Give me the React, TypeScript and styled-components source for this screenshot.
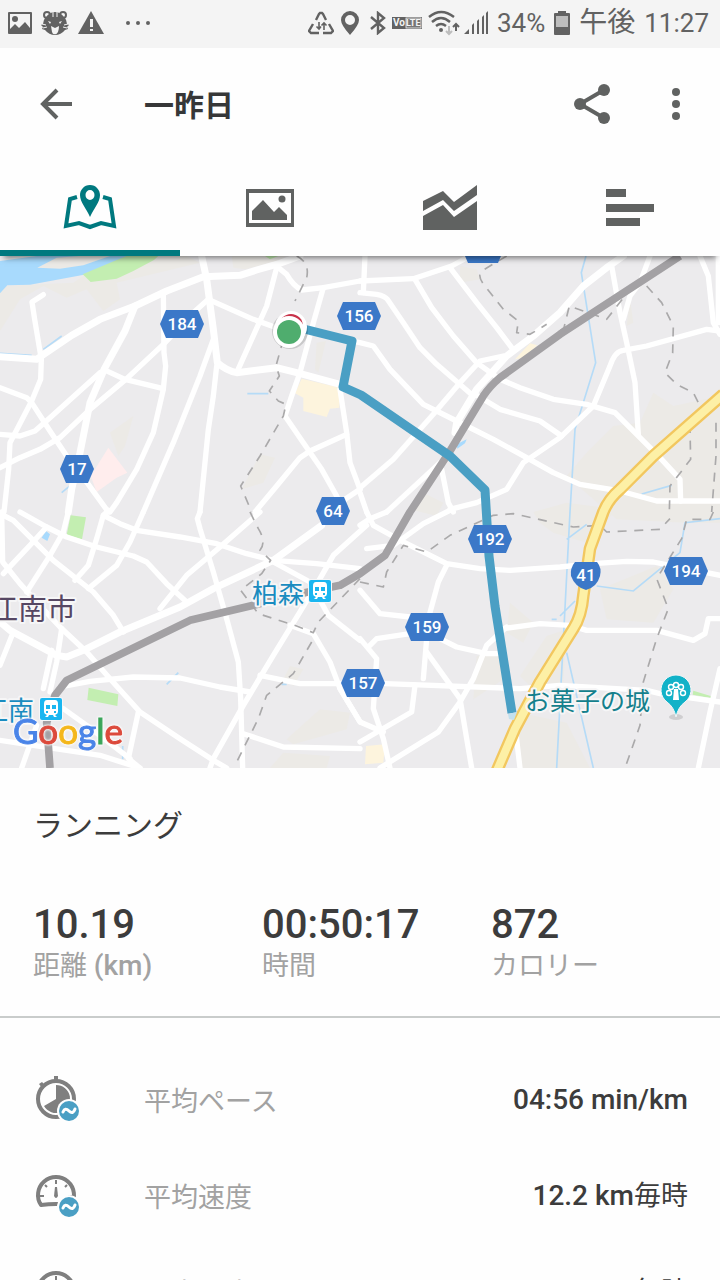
import React from 'react';
import styled, { createGlobalStyle } from 'styled-components';

const GlobalStyle = createGlobalStyle`
  * { box-sizing: border-box; }
  body {
    margin: 0;
    background: #fefefe;
    color: #3c3c3c;
    font-family: Roboto, "Noto Sans CJK JP", sans-serif;
    overflow-x: hidden;
  }
`;

const Page = styled.div`
  display: flex;
  flex-direction: column;
  width: 100%;
`;

const StatusBar = styled.div`
  display: flex;
  align-items: center;
  justify-content: space-between;
  height: 48px;
  padding: 0 11px 2px 8px;
  background: #f4f4f4;
  color: #626262;
`;

const StatusGroup = styled.div<{ $gap: number }>`
  display: flex;
  align-items: center;
  gap: ${(p) => p.$gap}px;
`;

const StatusText = styled.span<{ $large?: boolean }>`
  font-size: ${(p) => (p.$large ? 28 : 26)}px;
  line-height: 46px;
  white-space: nowrap;
`;

const AppBar = styled.header`
  display: flex;
  align-items: center;
  height: 112px;
  padding: 0 20px 0 32px;
  color: #606261;
`;

const Title = styled.h1`
  flex: 1;
  margin: 0 0 0 64px;
  padding-top: 4px;
  font-size: 30px;
  line-height: 40px;
  font-weight: 700;
  color: #363738;
`;

const IconButton = styled.button`
  display: flex;
  align-items: center;
  justify-content: center;
  width: 48px;
  height: 48px;
  padding: 0;
  border: 0;
  background: none;
  color: inherit;
`;

const Actions = styled.div`
  display: flex;
  gap: 36px;
`;

const Tabs = styled.nav`
  position: relative;
  z-index: 1;
  display: grid;
  grid-template-columns: repeat(4, 1fr);
  height: 96px;
  background: #fefefe;
  box-shadow: 0 6px 6px -4px rgba(0, 0, 0, 0.5);
`;

const Tab = styled.button<{ $active?: boolean }>`
  display: flex;
  align-items: center;
  justify-content: center;
  padding: 6px 0 0;
  border: 0;
  border-bottom: 6px solid ${(p) => (p.$active ? '#00797f' : 'transparent')};
  background: none;
  color: ${(p) => (p.$active ? '#00797f' : '#606261')};
`;

const MapArea = styled.div`
  display: grid;
  overflow: hidden;
  background: #ecebed;
  & > * {
    grid-area: 1 / 1;
  }
`;

const MapLayer = styled.svg`
  display: block;
  width: 100%;
  height: 512px;
`;

const Halo = styled.text<{ $color: string; $size: number }>`
  font-family: Roboto, "Noto Sans CJK JP", sans-serif;
  font-size: ${(p) => p.$size}px;
  fill: ${(p) => p.$color};
  stroke: #f6f6f7;
  stroke-width: 4px;
  stroke-linejoin: round;
  paint-order: stroke;
`;

const Logo = styled.text`
  font-family: Lato, sans-serif;
  font-size: 35px;
  stroke-width: 1px;
  filter: drop-shadow(0 0 1px #fff) drop-shadow(0 0 1px #fff);
`;

const LogoLetter = styled.tspan<{ $color: string }>`
  fill: ${(p) => p.$color};
  stroke: ${(p) => p.$color};
`;

const ShieldText = styled.text`
  font-family: Roboto, sans-serif;
  font-size: 17px;
  font-weight: 500;
  fill: #fff;
  text-anchor: middle;
`;

const Summary = styled.section`
  display: flex;
  flex-direction: column;
  gap: 54px;
  padding: 38px 0 34px 33px;
  border-bottom: 2px solid #c9cccb;
`;

const Activity = styled.h2`
  margin: 0;
  font-size: 30px;
  line-height: 40px;
  font-weight: 400;
`;

const Stats = styled.dl`
  display: grid;
  grid-template-columns: repeat(3, 1fr);
  margin: 0;
`;

const Stat = styled.div`
  display: flex;
  flex-direction: column-reverse;
`;

const StatLabel = styled.dt`
  font-size: 27px;
  line-height: 32px;
  color: #a2a2a2;
  white-space: nowrap;
`;

const StatValue = styled.dd`
  margin: 0;
  font-size: 40px;
  line-height: 50px;
  font-weight: 500;
`;

const Unit = styled.span`
  font-size: 28px;
  font-weight: 500;
`;

const Kanji = styled.span`
  font-size: 27px;
  font-weight: 400;
`;

const Details = styled.dl`
  margin: 0;
  padding-top: 34px;
`;

const DetailRow = styled.div`
  display: flex;
  align-items: center;
  height: 96px;
  padding: 0 32px;
`;

const DetailIcon = styled.svg`
  flex: none;
  width: 48px;
  height: 48px;
  margin-right: 64px;
`;

const DetailLabel = styled.dt`
  flex: 1;
  padding-top: 3px;
  font-size: 27px;
  line-height: 40px;
  color: #a2a2a2;
`;

const DetailValue = styled.dd`
  margin: 0;
  font-size: 28px;
  line-height: 40px;
  font-weight: 500;
`;

/* ---- map data: each quadrant of the map carries its own origin ---- */

type Quad = 'nw' | 'ne' | 'sw' | 'se';
const origin: Record<Quad, string> = {
  nw: 'translate(0 0)',
  ne: 'translate(1080 0)',
  sw: 'translate(0 768)',
  se: 'translate(1080 768)',
};

const roads: Record<Quad, string[]> = {
  nw: [
    'M130 116L96 138L104 190L124 310L122 370L95 435L30 560L26 640L12 768',
    'M0 395L80 425L95 440L150 525L200 600L265 685L325 768',
    'M0 535L60 540L105 525L150 485L300 350',
    'M0 635L60 605L120 580L180 545L270 460L380 368L490 265L580 170L625 130',
    'M310 340L375 370L490 398',
    'M490 110L492 290L497 330L490 400L460 530L410 640L350 740L330 768',
    'M625 130L760 190L830 215',
    'M640 250L600 360L520 560L430 768',
    'M650 330L640 420L625 520L600 768',
    'M830 35L800 150L710 350',
    'M835 35L860 55Q880 90 905 102L970 95L1080 75',
    'M970 95L940 200L900 350L875 420L855 480L910 560L965 640L1010 720L1030 768',
    'M1020 400L1040 530L1050 620L1080 700',
    'M1040 535L930 585L900 605L830 690L765 768',
    'M1000 768L1035 730L1080 700',
  ],
  ne: [
    'M0 75L160 68L275 30L330 0',
    'M15 0L10 110',
    'M0 110L50 115Q75 120 82 130L130 200L180 275L230 325L340 420',
    'M165 70L215 155L280 240L350 320L420 370L480 395L580 430L680 445L765 470L840 545L900 605L960 670L962 735',
    'M270 35L350 140L410 215L455 275',
    'M430 300L360 315L300 380L220 475L100 610L0 695',
    'M-25 255L0 260L40 270L90 340L190 445L290 495L400 550L500 605L580 650L660 685L780 705L890 735L1080 735',
    'M345 415L420 460L540 495L605 540',
    'M270 760L350 740L440 700L490 620L600 545L700 450L750 330Q765 285 790 283L860 270L1040 220L1080 225',
    'M755 30L780 170L800 260L825 380L835 535',
    'M870 0L840 80L810 120L790 190',
    'M1020 0L1045 60L1060 200L1080 235',
    'M1075 0V200',
    'M240 620L80 768',
    'M0 710L20 768',
    'M245 640L265 740L280 768',
  ],
  sw: [
    'M0 5L40 25L160 145L280 240L340 310L370 360',
    'M60 0L140 45L200 75L290 105L400 132L440 150L500 215L560 270',
    'M205 0L190 60L150 130L80 240',
    'M140 45L90 100L10 185',
    'M5 0L8 150L60 215L110 270L180 345L260 420L330 500L420 600L540 680L640 745L680 768',
    'M325 -5L310 10L290 80L265 160L225 205',
    'M310 10L360 35L410 55L540 75L650 95L740 125L820 145L950 155L1080 170',
    'M430 0L390 90L350 160L265 230',
    'M780 0L660 105L560 190L480 290',
    'M600 0L592 20L600 50L640 180L680 320L715 450L722 560L728 768',
    'M820 150L930 210L985 310L1080 385',
    'M1100 40L1000 130L960 200L900 300L820 430L730 580L640 740L630 768',
    'M40 360L0 460',
    'M155 415L130 530',
    'M185 350L170 450L150 540',
    'M180 525L270 508L400 495L540 498L660 525L750 540',
    'M780 490L900 515L1020 515',
    'M870 340L940 365L990 450L1020 530L1080 630',
    'M730 665L850 705L1080 710',
    'M0 685L100 700L300 730L420 768',
    'M110 640L65 768',
    'M415 600L385 740L420 768',
    'M190 590L260 640L390 740',
  ],
  se: [
    'M20 0L40 40L130 90L260 155L360 170L450 175L600 165L700 155L800 148L880 150L1080 190',
    'M0 40L30 20L80 0',
    'M20 110L100 100L190 35L270 -5',
    'M0 235L60 305L150 315',
    'M260 160L235 210L205 320L190 500',
    'M0 380L50 440L40 590L70 680L90 768',
    'M30 400L50 380L150 365L240 380L290 405L380 425L430 425',
    'M430 350L540 335L630 340L680 355L890 355L1000 385L1035 365L1045 320L1080 320',
    'M440 345L380 400L340 500L300 570L235 660L60 768',
    'M0 690L155 600L165 520',
    'M200 420L300 560L320 680L335 768',
    'M-20 515L75 515L480 530L600 520L860 535L900 545L1080 570',
    'M465 640L480 768',
    'M1080 470L1050 600L1015 768',
    'M-60 530L0 630L70 660',
  ],
};

const mainRoads: Record<Quad, string[]> = {
  nw: [
    'M0 302L110 310L130 296L215 238L300 190L405 150L500 105L610 62L720 58L770 42L840 22L900 0',
    'M405 150L375 225L315 335L270 440L240 590L215 700L205 768',
    'M605 0L620 70L640 220L652 320Q680 345 710 350L830 335L890 350L1020 385',
  ],
  ne: ['M790 0L740 35L670 90L600 170L520 240L440 300L350 400L290 500L285 530'],
  sw: ['M965 40L820 145L640 230L540 285L360 360L250 415L200 435L170 430L30 355L0 330'],
  se: [],
};

const borders: Record<Quad, string[]> = {
  nw: [
    'M890 0Q930 20 920 65L885 135',
    'M850 250L828 330L838 360L808 405L835 435L858 445L850 480L780 600L722 690L755 768',
  ],
  ne: [
    'M440 0L365 45Q350 60 375 90L430 160L475 195L470 230L510 235L560 205',
    'M600 225L612 215L628 150L740 190L810 100',
    'M860 90L905 140L940 210L938 290L915 350L950 385L1000 410L1020 450L990 520L992 610L930 690L928 768',
    'M1068 500V600L1055 768',
  ],
  sw: [
    'M750 0L775 50Q800 90 780 115L812 145L785 185L722 235L775 305L890 342L940 362L955 330L1080 200',
    'M935 390L880 485L800 550L775 620L710 750',
  ],
  se: [
    'M0 210L70 225L80 180L130 100L200 120L270 70L400 10L460 5L640 45L720 40L740 60L900 52L930 20',
    'M1060 0L1050 22L980 22L965 80L890 200L925 290L890 380L850 510L840 640L795 768',
  ],
};

const Strokes = ({ data, ...rest }: { data: Record<Quad, string[]> } & React.SVGProps<SVGGElement>) => (
  <g fill="none" strokeLinejoin="round" {...rest}>
    {(Object.keys(data) as Quad[]).map((q) => (
      <g key={q} transform={origin[q]}>
        {data[q].map((d) => (
          <path key={d} d={d} />
        ))}
      </g>
    ))}
  </g>
);

const Shield = ({ x, y, label }: { x: number; y: number; label: string }) => {
  const w = label.length > 2 ? 22 : 17;
  return (
    <g transform={`translate(${x} ${y})`}>
      <path d={`M${-w} 0L${6 - w} -14H${w - 6}L${w} 0L${w - 6} 14H${6 - w}Z`} fill="#3b78c8" />
      <ShieldText y="6">{label}</ShieldText>
    </g>
  );
};

const Station = ({ x, y }: { x: number; y: number }) => (
  <g transform={`translate(${x} ${y})`}>
    <rect x="-12" y="-12" width="24" height="24" rx="3" fill="#f6f6f7" />
    <rect x="-11" y="-11" width="22" height="22" rx="2" fill="#1ab6f0" />
    <path
      fillRule="evenodd"
      fill="#fff"
      d="M-4 -9H4Q7 -9 7 -5V3Q7 5 4 6L6 8H3L2 6H-2L-3 8H-6L-4 6Q-7 5 -7 3V-5Q-7 -9 -4 -9ZM-5 -4V0H-1V-4ZM1 -4V0H5V-4ZM-5 2V4H-3V2ZM3 2V4H5V2Z"
    />
  </g>
);

const nationalRoad = 'M2170 415L1960 600L1860 700Q1825 730 1810 768L1770 878L1750 1018Q1745 1080 1720 1118L1620 1278L1545 1418L1490 1546';

const RouteMap = () => (
  <MapLayer viewBox="0 0 720 512" preserveAspectRatio="xMidYMid slice" role="img" aria-label="ランニングのルート">
    <g transform="scale(0.33333)">
      {/* land cover */}
      <g fill="#eceae6">
        <path d="M0 90L220 80L340 0H560L600 20L350 80L360 130L310 165L260 100L200 125L130 90L60 130L0 225Z" />
        <path d="M695 0H860L830 15L735 40L700 35Z" />
        <path d="M400 480L330 530L355 600L375 570Z" />
        <path d="M780 595L825 605L790 680L725 700Z" />
        <path d="M950 260L978 255L955 350L945 340Z" />
        <path d="M1380 30L1430 40L1440 70L1380 80Z" />
        <path d="M1890 130L1900 200L1880 210Z" />
        <path d="M1960 410L2020 450L2160 420V800H2060L1850 790L1700 660L1760 590L1840 510L1920 500Z" />
        <path d="M1270 710L1330 740L1310 780L1230 760Z" />
        <path d="M1600 768L1700 740L1850 760L1760 860L1660 830L1620 800Z" />
        <path d="M1800 1000L1970 930L2020 1000L1960 1100L1820 1090Z" />
        <path d="M1530 1040L1600 1100L1570 1160L1520 1130Z" />
        <path d="M1640 1140L1700 1120L1690 1280L1600 1300L1560 1260Z" />
        <path d="M1430 1200L1500 1190L1510 1270L1420 1330Z" />
        <path d="M1560 1370L1700 1400L1770 1536H1560Z" />
        <path d="M960 1360L1050 1370L1040 1420L880 1465L860 1450Z" />
        <path d="M850 1490L990 1500L980 1536H810Z" />
        <path d="M870 1230L910 1240L880 1290L850 1270Z" />
      </g>
      <path fill="#a8dafd" d="M0 15L110 0H400L350 30L260 55L90 86L22 88L0 112Z" />
      <path fill="#eceae6" d="M112 35L170 5L240 0H330L250 28L180 38Z" />
      <path fill="#c3eeb1" d="M248 55L350 12L380 0H475L462 12L400 45L350 68L272 78ZM795 0H835L810 10ZM212 778L258 784L246 850L200 836ZM266 1295L355 1315L352 1350L262 1332ZM2080 1304L2132 1320V1326L2078 1316Z" />
      <path fill="#ffeded" d="M325 575L382 650L350 665L290 708L272 660Z" />
      <path fill="#fdf4dd" d="M905 368L1020 395L1018 455L990 458L980 483L910 465V425L885 412ZM1590 262L1612 268L1570 305L1545 310ZM1098 1470L1155 1465L1150 1520L1095 1525Z" />
      <path
        fill="none"
        stroke="#b5dbf7"
        strokeWidth="5"
        d="M0 292L95 298M130 280L185 240M742 413H805M185 710L215 685M1758 0L1744 50L1787 320L1725 520L1710 768L1670 1536M1700 850L1760 805M1680 1080L1725 1035M1670 1090H1655M1700 1190L1780 1536M1790 990L1900 1005L2040 890L2055 800L2160 788M1925 714L2015 688M500 1285L535 1250M368 1470V1510M845 1285H860"
      />
      <path fill="#a8dafd" d="M1370 565L1400 550L1395 562L1372 578ZM138 825L150 835L142 855L125 845Z" />

      <Strokes data={roads} stroke="#fff" strokeWidth="16" strokeLinecap="round" />
      <Strokes data={mainRoads} stroke="#fff" strokeWidth="21" strokeLinecap="round" />
      <Strokes data={borders} stroke="#aaa9aa" strokeWidth="5" strokeDasharray="27 23" />

      {/* railway */}
      <path
        fill="none"
        stroke="#a3a1a4"
        strokeWidth="23"
        strokeLinejoin="round"
        d="M2040 0L1940 65L1680 235L1500 365Q1470 390 1450 420L1350 585L1230 768L1155 898L1080 953L1020 988L900 1013L760 1048L570 1093L200 1273L165 1318L140 1400L150 1536"
      />

      {/* national road */}
      <g fill="none" strokeLinejoin="round">
        <path stroke="#f2c75f" strokeWidth="38" d={nationalRoad} />
        <path stroke="#fdf0a6" strokeWidth="24" d={nationalRoad} />
      </g>
    </g>

    {/* recorded track */}
    <path
      d="M300 72L352 85L343 131L361 139L450 200L485 234L489 300L495 350L512 457"
      fill="none"
      stroke="#4a9fc4"
      strokeWidth="9"
      strokeLinejoin="round"
    />
    <path d="M508 458L517 456L514 464L509 463Z" fill="#c3e0ee" />
  </MapLayer>
);

const MapLabels = () => (
  <MapLayer viewBox="0 0 720 512" preserveAspectRatio="xMidYMid slice">
    <Shield x={182} y={68} label="184" />
    <Shield x={359} y={60} label="156" />
    <Shield x={77} y={213} label="17" />
    <Shield x={333} y={255} label="64" />
    <Shield x={490} y={283} label="192" />
    <Shield x={427} y={371} label="159" />
    <Shield x={363} y={427} label="157" />
    <Shield x={686} y={315} label="194" />
    <path d="M462 -7H504L498 7H468Z" fill="#3b78c8" />
    <path d="M575 306H597Q602 312 600 320Q597 331 586 334Q575 331 571 320Q570 312 575 306Z" fill="#3b78c8" />
    <ShieldText x="586" y="325">41</ShieldText>

    <Halo x="-11" y="364" $size={29} $color="#564763">江南市</Halo>
    <Halo x="252" y="347" $size={26} $color="#1a8cc0">柏森</Halo>
    <Station x={320} y={335} />
    <Halo x="-18" y="464" $size={26} $color="#1a8cc0">江南</Halo>
    <Station x={51} y={453} />
    <Halo x="525" y="454" $size={25} $color="#14808c">お菓子の城</Halo>

    <ellipse cx="676" cy="461" rx="7" ry="3" fill="#000" opacity="0.12" />
    <path d="M676 461Q674 451 667 446A15 15 0 1 1 685 446Q678 451 676 461Z" fill="#12b2c8" stroke="#f6f6f7" />
    <g fill="none" stroke="#fff" strokeWidth="1.4">
      <circle cx="676" cy="429" r="2.500" />
      <circle cx="671" cy="431" r="2.500" />
      <circle cx="681" cy="431" r="2.500" />
      <circle cx="669" cy="437" r="2.500" />
      <circle cx="683" cy="437" r="2.500" />
    </g>
    <path d="M674 433H678L679 444H673Z" fill="#fff" />

    <circle cx="290" cy="75" r="18" fill="#000" opacity="0.15" />
    <circle cx="291" cy="71" r="16" fill="#fff" />
    <circle cx="291" cy="70" r="12" fill="#c8324a" />
    <circle cx="289" cy="76" r="16" fill="#fff" />
    <circle cx="289" cy="76" r="12" fill="#4fad6e" />

    <Logo x="13" y="488">
      <LogoLetter $color="#4a84e8">G</LogoLetter>
      <LogoLetter $color="#dc4a3c">o</LogoLetter>
      <LogoLetter $color="#f4b71c">o</LogoLetter>
      <LogoLetter $color="#4a84e8">g</LogoLetter>
      <LogoLetter $color="#3ba55a">l</LogoLetter>
      <LogoLetter $color="#dc4a3c">e</LogoLetter>
    </Logo>
  </MapLayer>
);

/* ---- icons ---- */

const StatusIcons = {
  picture: (
    <svg width="24" height="24" viewBox="0 0 24 24" fill="currentColor">
      <path fillRule="evenodd" d="M1 1H23Q24 1 24 2V22Q24 23 23 23H1Q0 23 0 22V2Q0 1 1 1ZM2 3V18L7 13L11 17L17 11L22 17V3Z" />
      <circle cx="7" cy="8" r="3" />
    </svg>
  ),
  tiger: (
    <svg width="28" height="26" viewBox="0 0 28 26">
      <g fill="#f4f4f4" stroke="currentColor" strokeWidth="2">
        <circle cx="6" cy="5" r="3" />
        <circle cx="22" cy="5" r="3" />
      </g>
      <path fill="currentColor" d="M14 2Q19 2 23 7Q26 10 26 14L28 15L26 17L27 19L24 20Q20 25 14 25Q8 25 4 20L1 19L2 17L0 15L2 14Q2 10 5 7Q9 2 14 2Z" />
      <path fill="none" stroke="#f4f4f4" d="M12 2V7M16 2V7M1 14L5 15M2 18L6 17M27 14L23 15M26 18L22 17" />
      <path fill="#f4f4f4" d="M7 11L10 12L9 14ZM21 11L18 12L19 14ZM10 16L14 18L18 16Q18 19 17 22Q15 25 14 24Q12 25 11 22Z" />
    </svg>
  ),
  warning: (
    <svg width="26" height="24" viewBox="0 0 26 24">
      <path fill="currentColor" d="M13 0L26 23H0Z" />
      <path fill="#f4f4f4" d="M12 8H15V16H12ZM12 18H15V20H12Z" />
    </svg>
  ),
  dots: (
    <svg width="28" height="24" viewBox="0 0 28 24" fill="currentColor">
      <circle cx="6" cy="12" r="2" />
      <circle cx="16" cy="12" r="2" />
      <circle cx="26" cy="12" r="2" />
    </svg>
  ),
  recycle: (
    <svg width="26" height="24" viewBox="0 0 26 24" fill="none" stroke="currentColor" strokeWidth="2.4">
      <path d="M8 9L11 3L12 2H14L15 3L18 9M21 13L25 20L23 22H15M11 22H3L1 20L5 13" />
      <path strokeWidth="1.6" d="M11 11V18M8.500 15.500L11 18L13 15.500M16 19V12M13.500 14.500L16 12L18.500 14.500" />
    </svg>
  ),
  pin: (
    <svg width="20" height="24" viewBox="0 0 20 24" fill="currentColor">
      <path fillRule="evenodd" d="M10 0A9 9 0 0 1 19 9Q19 14 10 24Q1 14 1 9A9 9 0 0 1 10 0ZM10 4A5 5 0 1 0 10 14A5 5 0 1 0 10 4Z" />
    </svg>
  ),
  bluetooth: (
    <svg width="20" height="24" viewBox="0 0 20 24" fill="none" stroke="currentColor" strokeWidth="2.4">
      <path d="M5 6L18 17L12 22V2L18 7L5 18" />
    </svg>
  ),
  volte: (
    <svg width="30" height="24" viewBox="0 0 30 24">
      <rect x="0" y="6" width="30" height="12" fill="currentColor" />
      <rect x="14" y="7" width="15" height="10" fill="#777" stroke="#f4f4f4" strokeWidth="0.8" />
      <text x="1" y="15" fill="#f4f4f4" fontSize="10" fontWeight="700" fontFamily="Roboto, sans-serif">Vo</text>
      <text x="14" y="15" fill="#f4f4f4" fontSize="9" fontWeight="700" fontFamily="Roboto, sans-serif">LTE</text>
    </svg>
  ),
  wifi: (
    <svg width="30" height="24" viewBox="0 0 30 24" overflow="visible" fill="none" stroke="currentColor" strokeWidth="2.4">
      <path d="M1 6Q13 -4 26 6M4 11Q13 3 22 11M8 15Q13 11 18 15" />
      <circle cx="13" cy="19" r="2" fill="currentColor" stroke="none" />
      <path stroke="#bdbdbd" strokeWidth="2" d="M21 15V23M18 20L21 23L24 20" />
      <path strokeWidth="2" d="M28 20V13M25 16L28 13L31 16" />
    </svg>
  ),
  signal: (
    <svg width="24" height="24" viewBox="0 0 24 24" fill="currentColor">
      <path d="M0 23L5 18V23ZM8 14L10 12V23H8ZM13 10L15 8V23H13ZM18 6L20 4V23H18ZM22 2L24 0V23H22Z" />
    </svg>
  ),
  battery: (
    <svg width="16" height="24" viewBox="0 0 16 24">
      <path fill="currentColor" d="M4 0H12V2H15Q16 2 16 3V23Q16 24 15 24H1Q0 24 0 23V3Q0 2 1 2H4Z" />
      <path fill="#bdbdbd" d="M2 5H14V16H2Z" />
    </svg>
  ),
};

const AverageBadge = () => (
  <>
    <circle cx="37" cy="35" r="12" fill="#fefefe" />
    <circle cx="37" cy="35" r="10" fill="#4a9fc4" />
    <path d="M31 36Q33 31 37 35T43 33" fill="none" stroke="#fff" strokeWidth="3" strokeLinecap="round" />
  </>
);

const PaceIcon = () => (
  <DetailIcon viewBox="0 0 48 48" aria-hidden="true">
    <circle cx="24" cy="23" r="18" fill="none" stroke="#7f7f7f" strokeWidth="4" />
    <path d="M22 0H26V4H22ZM7 8L10 6L13 9L10 12Z" fill="#7f7f7f" />
    <path d="M24 9A14 14 0 1 1 12 30L24 23Z" fill="#7f7f7f" />
    <AverageBadge />
  </DetailIcon>
);

const SpeedIcon = ({ average }: { average?: boolean }) => (
  <DetailIcon viewBox="0 0 48 48" aria-hidden="true">
    <path d="M9 33A18 18 0 1 1 39 33Q24 31 9 33Z" fill="none" stroke="#7f7f7f" strokeWidth="4" strokeLinejoin="round" />
    <path d="M24 8V12M8 24H12M36 24H40M13 13L15 15M35 13L33 15" stroke="#7f7f7f" strokeWidth="2" />
    <path d="M23 15H25L26 24Q24 28 22 24Z" fill="#7f7f7f" />
    {average && <AverageBadge />}
  </DetailIcon>
);

export default function App() {
  return (
    <Page>
      <GlobalStyle />
      <StatusBar>
        <StatusGroup $gap={18}>
          <StatusGroup $gap={9}>
            {StatusIcons.picture}
            {StatusIcons.tiger}
            {StatusIcons.warning}
          </StatusGroup>
          {StatusIcons.dots}
        </StatusGroup>
        <StatusGroup $gap={9}>
          <StatusGroup $gap={6}>
            {StatusIcons.recycle}
            {StatusIcons.pin}
            {StatusIcons.bluetooth}
            {StatusIcons.volte}
            {StatusIcons.wifi}
            {StatusIcons.signal}
          </StatusGroup>
          <StatusText>34%</StatusText>
          {StatusIcons.battery}
          <StatusText $large>午後</StatusText>
          <StatusText>11:27</StatusText>
        </StatusGroup>
      </StatusBar>

      <AppBar>
        <IconButton aria-label="戻る">
          <svg width="32" height="32" viewBox="0 0 32 32" fill="none" stroke="currentColor" strokeWidth="4">
            <path d="M32 16H3M17 2L3 16L17 30" />
          </svg>
        </IconButton>
        <Title>一昨日</Title>
        <Actions>
          <IconButton aria-label="共有">
            <svg width="36" height="40" viewBox="0 0 36 40" fill="currentColor">
              <path d="M30 6L6 20L30 34" fill="none" stroke="currentColor" strokeWidth="4" />
              <circle cx="30" cy="6" r="6" />
              <circle cx="6" cy="20" r="6" />
              <circle cx="30" cy="34" r="6" />
            </svg>
          </IconButton>
          <IconButton aria-label="メニュー">
            <svg width="8" height="32" viewBox="0 0 8 32" fill="currentColor">
              <circle cx="4" cy="4" r="4" />
              <circle cx="4" cy="16" r="4" />
              <circle cx="4" cy="28" r="4" />
            </svg>
          </IconButton>
        </Actions>
      </AppBar>

      <Tabs>
        <Tab $active aria-label="マップ">
          <svg width="56" height="48" viewBox="0 0 56 48" fill="currentColor">
            <path d="M15 13L8 15L4 42L17 39L28 43L39 39L52 42L48 15L41 13" fill="none" stroke="currentColor" strokeWidth="4" />
            <path fillRule="evenodd" d="M28 1C34 1 38 6 38 11C38 18 32 24 28 33C24 24 18 18 18 11C18 6 22 1 28 1ZM28 6A4.500 5 0 1 0 28 16A4.500 5 0 1 0 28 6Z" />
          </svg>
        </Tab>
        <Tab aria-label="写真">
          <svg width="48" height="48" viewBox="0 0 48 48" fill="currentColor">
            <path fillRule="evenodd" d="M0 5H48V43H0ZM3 9V39H45V9Z" />
            <path d="M6 36V27L17 16L28 28L33 23L41 31V36Z" />
            <circle cx="36" cy="15" r="3.500" />
          </svg>
        </Tab>
        <Tab aria-label="グラフ">
          <svg width="54" height="48" viewBox="0 0 54 48" fill="currentColor">
            <path d="M0 17L20 7L31 18L54 1V11L31 27L20 16L0 27ZM0 32L20 21L31 33L54 17V46H0Z" />
          </svg>
        </Tab>
        <Tab aria-label="ラップ">
          <svg width="48" height="48" viewBox="0 0 48 48" fill="currentColor">
            <path d="M0 5H20V13H0ZM0 20H48V28H0ZM0 34H34V42H0Z" />
          </svg>
        </Tab>
      </Tabs>

      <MapArea>
        <RouteMap />
        <MapLabels />
      </MapArea>

      <Summary>
        <Activity>ランニング</Activity>
        <Stats>
          <Stat>
            <StatLabel>距離 <Unit>(km)</Unit></StatLabel>
            <StatValue>10.19</StatValue>
          </Stat>
          <Stat>
            <StatLabel>時間</StatLabel>
            <StatValue>00:50:17</StatValue>
          </Stat>
          <Stat>
            <StatLabel>カロリー</StatLabel>
            <StatValue>872</StatValue>
          </Stat>
        </Stats>
      </Summary>

      <Details>
        <DetailRow>
          <PaceIcon />
          <DetailLabel>平均ペース</DetailLabel>
          <DetailValue>04:56 min/km</DetailValue>
        </DetailRow>
        <DetailRow>
          <SpeedIcon average />
          <DetailLabel>平均速度</DetailLabel>
          <DetailValue>12.2 km<Kanji>毎時</Kanji></DetailValue>
        </DetailRow>
        <DetailRow>
          <SpeedIcon />
          <DetailLabel>最高速度</DetailLabel>
          <DetailValue>km<Kanji>毎時</Kanji></DetailValue>
        </DetailRow>
      </Details>
    </Page>
  );
}
